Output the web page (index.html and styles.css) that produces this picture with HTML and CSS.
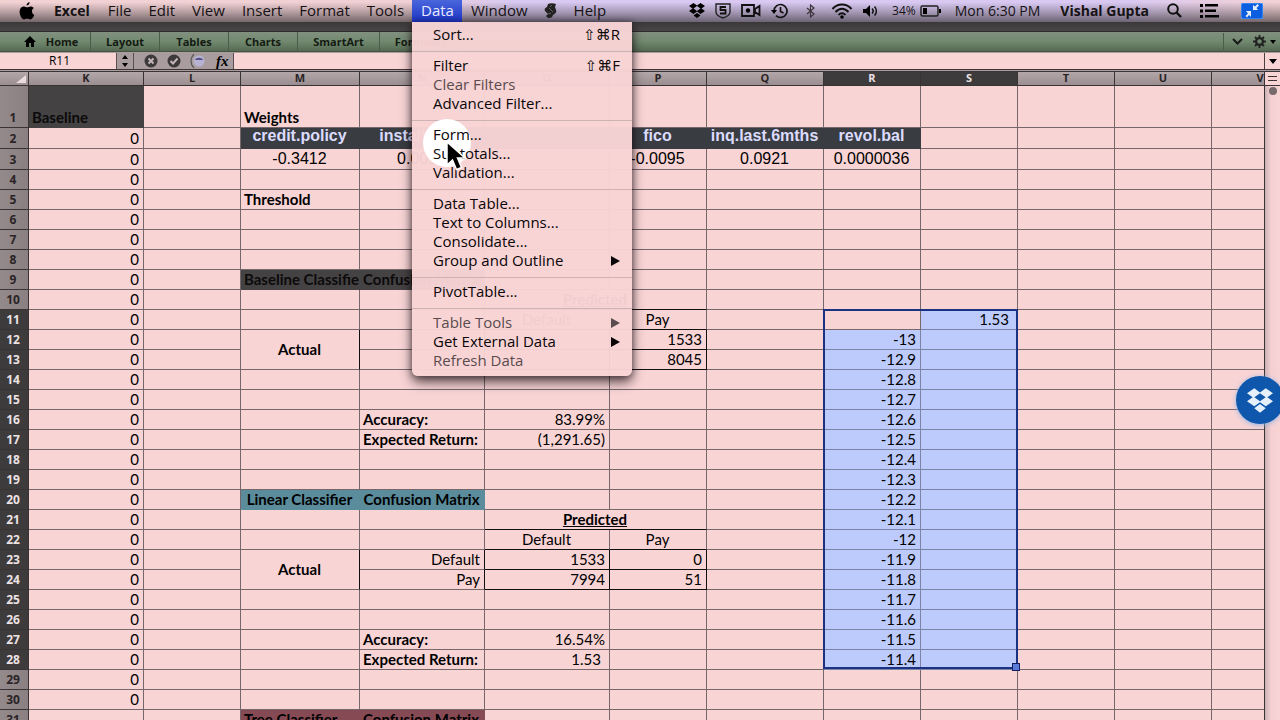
FILE: index.html
```html
<!DOCTYPE html>
<html lang="en">
<head>
<meta charset="utf-8">
<title>Excel</title>
<link rel="stylesheet" href="styles.css">
</head>
<body>
<header class="menubar">
  <nav class="menus">
    <button class="apple" aria-label="Apple"><svg width="16" height="18" viewBox="0 0 16 18"><path d="M10.6 0c.2 1.700-1.300 3.500-3 3.600C7.400 1.900 9 .2 10.600 0zM13 9.300c0-1.600.8-2.600 1.900-3.300-.8-1.100-2-1.600-3.300-1.600-1.400 0-2.300.8-3.300.8-1 0-2-.8-3.300-.8C2.500 4.400.6 6.500.6 9.800c0 3.600 2.400 7.700 4.500 7.700 1.100 0 1.700-.7 3.100-.7 1.400 0 1.900.7 3.100.7 1.600 0 3.200-2.300 3.900-4.500-1.400-.7-2.200-1.900-2.200-3.700z"/></svg></button>
    <button class="bold">Excel</button>
    <button>File</button>
    <button>Edit</button>
    <button>View</button>
    <button>Insert</button>
    <button>Format</button>
    <button>Tools</button>
    <div class="open">
      <button class="active">Data</button>
      <div class="menu">
        <div class="halo"></div>
        <button>Sort...<kbd>⇧⌘R</kbd></button>
        <hr>
        <button>Filter<kbd>⇧⌘F</kbd></button>
        <button class="off">Clear Filters</button>
        <button>Advanced Filter...</button>
        <hr>
        <button>Form...</button>
        <button>Subtotals...</button>
        <button>Validation...</button>
        <hr>
        <button>Data Table...</button>
        <button>Text to Columns...</button>
        <button>Consolidate...</button>
        <button>Group and Outline<i></i></button>
        <hr>
        <button>PivotTable...</button>
        <hr>
        <button class="off">Table Tools<i></i></button>
        <button>Get External Data<i></i></button>
        <button class="off">Refresh Data</button>
        <svg class="pointer" width="22" height="32" viewBox="0 0 22 32"><path d="M2 2v23l5.500-5 4 9.500 5-2-4-9.500H20z" fill="#000" stroke="#fff" stroke-width="1.500"/></svg>
      </div>
    </div>
    <button>Window</button>
    <button class="script" aria-label="Scripts"><svg width="13" height="16" viewBox="0 0 13 16"><path d="M4 1c2-1 5-1 8 0l-1 3 1 3c1 2-1 4-3 5l-1 2c-2 2-5 1-6-1l2-2-3-3c-1-2 0-3 2-4z" fill="#222"/><path d="M5 5l4 4M8 2L6 4M4 11l3-1" stroke="#665d64" fill="none"/></svg></button>
    <button>Help</button>
  </nav>
  <div class="status">
    <svg width="16" height="16" viewBox="0 0 16 16"><path d="M4.500 0L8 2.500 11.500 0 16 3l-3.500 2.500L16 8l-4.500 3L8 8.500 4.500 11 0 8l3.500-2.500L0 3zM8 3L4.500 5.500 8 8l3.500-2.500zM8 10l3.500 2.500L8 15l-3.500-2.500z"/></svg>
    <svg class="shield" width="16" height="16" viewBox="0 0 16 16"><path d="M1 1h14v8c0 3-4 5-7 6-3-1-7-3-7-6z" fill="none" stroke="#222" stroke-width="1.400"/><path d="M11 4H5.500v3h5v3.500H5" fill="none" stroke="#111" stroke-width="1.800"/></svg>
    <svg width="20" height="13" viewBox="0 0 20 13"><path d="M1 1h12v11H1zM14 5l4.500-3v9L14 8z" fill="none" stroke="#111" stroke-width="1.800"/><circle cx="7" cy="6.500" r="2.200"/></svg>
    <svg width="17" height="16" viewBox="0 0 17 16"><path d="M3 8a6.500 6.500 0 1 1 2 4.700M9.500 4v4.500l3 1.500" fill="none" stroke="#111" stroke-width="1.700"/><path d="M0 7h6L3 11z"/></svg>
    <svg class="bt" width="9" height="14" viewBox="0 0 9 14"><path d="M1 4l7 6-3.500 3V1L8 4l-7 6" fill="none" stroke="#3c353c" stroke-width="1.200"/></svg>
    <svg class="wifi" width="22" height="16" viewBox="0 0 22 16"><g fill="none" stroke="#111" stroke-width="2"><path d="M1.500 6c5-6 14-6 19 0M4.500 9c4-4.500 9-4.500 13 0M7.500 12c2-2.500 5-2.500 7 0"/></g><circle cx="11" cy="14" r="1.800"/></svg>
    <svg width="15" height="14" viewBox="0 0 15 14"><path d="M0 5h3l4-4v12L3 9H0z"/><path d="M9 4.500c1.500 1.500 1.500 3.500 0 5M11.500 2.500c2.500 2.500 2.500 6.500 0 9" fill="none" stroke="#111" stroke-width="1.500"/></svg>
    <span class="pct">34%</span>
    <svg class="bat" width="21" height="12" viewBox="0 0 21 12"><rect x="1" y="1" width="17" height="10" rx="1.500" fill="none" stroke="#222" stroke-width="1.500"/><path d="M3 3h4v6H3zM19 4h2v4h-2z"/></svg>
    <span class="clock">Mon 6:30 PM</span>
    <b class="user">Vishal Gupta</b>
    <svg class="find" width="15" height="15" viewBox="0 0 15 15"><circle cx="6" cy="6" r="4.800" fill="none" stroke="#111" stroke-width="2"/><path d="M9.500 9.500L14 14" stroke="#111" stroke-width="2.400"/></svg>
    <svg class="list" width="19" height="14" viewBox="0 0 19 14"><path d="M0 0h3v3H0zM5 0h13v2.500H5zM0 5.500h3v3H0zM5 5.500h11v2.500H5zM0 11h3v3H0zM5 11h14v2.500H5z"/></svg>
    <svg width="22" height="16" viewBox="0 0 22 16"><rect width="22" height="16" rx="2" fill="#0c5ee0" stroke="#5aa4f4"/><path d="M12 7V2l2 1.500L16.500 1 18 2.500 15.500 5 17 7zM10 8v6l-2-2-2 2.500L4.500 13 7 10.500 5 8z" fill="#e4eefc"/></svg>
  </div>
</header>
<div class="titleedge"></div>
<nav class="ribbon">
  <button class="home"><svg width="12" height="11" viewBox="0 0 12 11"><path d="M6 0l6 6h-2v5H7V7H5v4H2V6H0z"/></svg>Home</button>
  <button>Layout</button>
  <button>Tables</button>
  <button>Charts</button>
  <button class="wide">SmartArt</button>
  <button class="wide">Formulas</button>
  <div class="ribbon-end">
    <svg width="11" height="7" viewBox="0 0 11 7"><path d="M1 1l4.500 4.500L10 1" fill="none" stroke="#1a1a1a" stroke-width="2"/></svg>
    <svg width="13" height="13" viewBox="0 0 13 13"><circle cx="6.500" cy="6.500" r="3.400" fill="none" stroke="#222" stroke-width="2.200"/><path d="M6.500 0v3M6.500 10v3M0 6.500h3M10 6.500h3M2 2l2 2M9 9l2 2M11 2L9 4M4 9l-2 2" stroke="#222" stroke-width="1.800"/></svg>
    <svg width="6" height="4" viewBox="0 0 6 4"><path d="M0 0h6L3 4z"/></svg>
  </div>
</nav>
<div class="formulabar">
  <input class="namebox" aria-label="Name box" value="R11">
  <button class="spin" aria-label="Names"><svg width="6" height="12" viewBox="0 0 6 12"><path d="M0 4l3-4 3 4zM0 8h6l-3 4z"/></svg></button>
  <div class="tools">
    <svg width="14" height="14" viewBox="0 0 14 14"><circle cx="7" cy="7" r="6.500" fill="#3d393b"/><path d="M4.500 4.500l5 5M9.500 4.500l-5 5" stroke="#c4b6b8" stroke-width="2"/></svg>
    <svg width="14" height="14" viewBox="0 0 14 14"><circle cx="7" cy="7" r="6.500" fill="#3d393b"/><path d="M3.500 7L6 9.500l4.500-5" fill="none" stroke="#c4b6b8" stroke-width="2"/></svg>
    <svg width="15" height="14" viewBox="0 0 15 14"><path d="M4 0c-4 4-4 10 0 14" fill="none" stroke="#555" stroke-width="1.200"/><ellipse cx="9" cy="7" rx="5.500" ry="5.500" fill="#b7b2d2"/><path d="M5 6c1-3 7-3 8 0z" fill="#55508a"/></svg>
    <em>fx</em>
  </div>
  <input class="formula" aria-label="Formula">
  <button class="expand" aria-label="Expand formula bar"><svg width="8" height="5" viewBox="0 0 8 5"><path d="M0 0h8L4 5z"/></svg></button>
</div>
<main class="sheet">
  <div class="grid"><table id="grid"></table></div>
  <aside class="scroll"><div class="split"></div><div class="thumb"></div></aside>
  <button class="dropbox" aria-label="Dropbox"><svg width="26" height="25" viewBox="0 0 16 15"><path d="M4.500 0L8 2.500 11.500 0 16 3l-3.500 2.500L16 8l-4.500 3L8 8.500 4.500 11 0 8l3.500-2.500L0 3zM8 3L4.500 5.500 8 8l3.500-2.500zM8 9.700l3.500 2.500L8 15l-3.500-2.800z" fill="#e6f0fa"/></svg></button>
</main>
<script src="sheet.js"></script>
</body>
</html>
```

FILE: styles.css
```css
* { box-sizing: border-box; }
body {
  margin: 0;
  height: 100vh;
  display: flex;
  flex-direction: column;
  overflow: hidden;
  background: #f8d4d5;
  color: #000;
  font: 14px/19px "Open Sans", "Noto Sans", sans-serif;
}
button {
  border: 0;
  padding: 0;
  background: none;
  color: inherit;
  font: inherit;
  white-space: nowrap;
}
svg { display: block; flex: none; }

/* Menu bar */
.menubar {
  position: relative;
  z-index: 5;
  flex: none;
  height: 22px;
  display: flex;
  justify-content: space-between;
  background:
    linear-gradient(rgba(0, 0, 0, 0) 10%, rgba(70, 64, 68, .35) 55%, rgba(50, 46, 50, .65)),
    linear-gradient(90deg, #f3d2d4 0, #f0d0d4 32%, #d8c8f2 40%, #d8c8f2 88%, #f3d2d4);
  color: #161214;
}
.menus { display: flex; font-size: 15px; }
.menus > button, .open > button { height: 22px; padding: 0 8px 1px 9px; }
.menus > .apple { padding: 0 10px 0 19px; }
.menus > .script { padding: 0 8px; }
.menus > .bold { padding-right: 9px; font-size: 14px; font-weight: 700; }
.open { position: relative; }
.open > .active { background: linear-gradient(#4a66dc, #1c35c4); color: #e8eaff; }
.status { display: flex; align-items: center; gap: 10px; padding: 0 17px 1px 0; white-space: nowrap; }
.status .bt { margin: 0 6px 0 8px; }
.pct { font-size: 12px; margin-left: 4px; }
.pct + .bat { margin-left: -6px; }
.clock { margin-left: 4px; }
.user { margin: 0 4px 0 10px; }
.find { margin-left: 4px; }
.list { margin: 0 12px 0 8px; }

.menu {
  position: absolute;
  top: 22px;
  left: 0;
  width: 220px;
  padding: 4px 0 5px;
  display: flex;
  flex-direction: column;
  border-radius: 0 0 6px 6px;
  background: rgba(248, 212, 213, .97);
  box-shadow: 0 6px 12px rgba(20, 10, 14, .7), 0 0 6px rgba(20, 10, 14, .4);
  color: #0a0608;
}
.menu > button {
  position: relative;
  height: 19px;
  padding: 0 12px 2px 21px;
  display: flex;
  justify-content: space-between;
  align-items: center;
  line-height: 17px;
}
.menu > .off { color: #5a4c4e; }
.menu hr {
  width: 100%;
  height: 1px;
  margin: 6px 0 5px;
  border: 0;
  background: #cfb2b4;
}
.menu kbd { font: 15px/17px "Open Sans", "DejaVu Sans", sans-serif; }
.menu i {
  border: 5px solid transparent;
  border-left: 9px solid currentColor;
  border-right: 0;
}
.halo {
  position: absolute;
  left: 11px;
  top: 97px;
  width: 48px;
  height: 48px;
  border-radius: 50%;
  background: #fff;
}
.pointer { position: absolute; left: 33px; top: 118px; }

/* Ribbon */
.titleedge { flex: none; height: 10px; background: linear-gradient(#3a3839, #484647); border-bottom: 1px solid #2e2c2d; }
.ribbon {
  flex: none;
  height: 20px;
  display: flex;
  background: linear-gradient(#829080, #71896f 50%, #566953);
  border-bottom: 1px solid #46543f;
  color: #141a12;
  font-size: 11px;
  font-weight: 700;
}
.ribbon button { width: 69px; border-right: 1px solid #4c5c4a; }
.ribbon .home { width: 91px; display: flex; align-items: center; justify-content: center; gap: 10px; padding-left: 12px; }
.ribbon .wide { width: 82px; }
.ribbon-end {
  margin: 1px 0 1px auto;
  padding: 0 4px 0 8px;
  display: flex;
  align-items: center;
  gap: 4px;
  border-left: 1px solid #4c5c4a;
}
.ribbon-end svg:nth-child(2) { margin-left: 6px; }

/* Formula bar */
.formulabar {
  flex: none;
  height: 20px;
  display: flex;
  padding-top: 1px;
  background: #a89c9e;
  border-bottom: 3px double #3c3436;
}
.formulabar input {
  min-width: 0;
  border: 0;
  padding: 0;
  background: #f8d4d5;
  font: 12px/16px "Open Sans", sans-serif;
}
.formulabar .namebox { width: 116px; padding-left: 3px; text-align: center; }
.spin {
  width: 18px;
  display: flex;
  align-items: center;
  justify-content: center;
  border: solid #5a5052;
  border-width: 0 1px;
}
.tools { width: 99px; padding-left: 10px; display: flex; align-items: center; gap: 9px; }
.tools em { font: italic bold 15px/16px "Liberation Serif", serif; margin-left: 2px; }
.formulabar .formula { flex: 1; border-left: 1px solid #5a5052; }
.expand {
  width: 16px;
  display: flex;
  align-items: center;
  justify-content: center;
  border-left: 1px solid #4a4042;
  background: #f8d4d5;
}

/* Worksheet */
.sheet { position: relative; flex: 1; min-height: 0; display: flex; overflow: hidden; }
.grid { flex: 1; min-width: 0; overflow: hidden; }
table {
  width: 100%;
  min-width: 1309px;
  table-layout: fixed;
  border-spacing: 0;
  font: 15px/19px Lato, "Open Sans", sans-serif;
}
td, th {
  height: 20px;
  padding: 0 4px 0 3px;
  border: solid #75676a;
  border-width: 0 1px 1px 0;
  overflow: hidden;
  white-space: nowrap;
  vertical-align: bottom;
  text-align: right;
}
thead th {
  height: 14px;
  padding: 0 0 1px;
  border-color: #3a3335;
  background: linear-gradient(#b3a7a9, #9a8e90);
  overflow: visible;
  font: 700 11px/12px "Open Sans", sans-serif;
  text-align: center;
  color: #2a2426;
}
thead th:first-child { text-align: right; padding-right: 2px; }
thead th svg { display: inline-block; vertical-align: top; margin-top: 3px; }
tbody th {
  padding: 0 2px 0 0;
  border-color: #3a3335;
  background: linear-gradient(90deg, #948a8c, #8a8082);
  font: 700 12px/18px "Open Sans", sans-serif;
  text-align: center;
  color: #2a2426;
}
thead th.on, tbody th.on { background: #3d3b3c; color: #ece2e4; }
.r1 > * { height: 42px; }
.r2 > *, .r3 > * { height: 21px; }
.c { text-align: center; vertical-align: middle; }
.l { text-align: left; }
.b { font-weight: 700; }
.u { text-decoration: underline; }
.num { padding-right: 8px; }
.arial { font-family: "Liberation Sans", sans-serif; font-size: 16px; line-height: 19px; vertical-align: top; }
.head { background: #393d42; color: #dcdcff; border-color: #393d42; line-height: 15px; }
.dark { background: #444243; border-color: #444243; color: #0c0a0b; }
.teal { background: #5a8c9c; border-color: #5a8c9c; }
.wine { background: #864a54; border-color: #864a54; }
.fill { background: #bccbfb; border-color: #7b84a4; }
.kr { border-right-color: #101010; }
.kb { border-bottom-color: #101010; }
.anchor { position: relative; overflow: visible; }
.range {
  position: absolute;
  left: -1px;
  top: -1px;
  width: 195px;
  height: 360px;
  border: 2px solid #1b3182;
  pointer-events: none;
}
.range::after {
  content: "";
  position: absolute;
  right: -4px;
  bottom: -4px;
  width: 6px;
  height: 6px;
  border: 1px solid #102060;
  background: #5a7ad8;
}

.scroll {
  width: 16px;
  border-left: 1px solid #3a3335;
  background: linear-gradient(90deg, #cbb2b4, #f4d0d2 40%, #f8d4d5);
}
.split { height: 14px; margin: 0; border: solid #3a3335; border-width: 0 0 1px; background: linear-gradient(#f8d4d5 4px, #3a3335 4px 5px, #f8d4d5 5px 8px, #3a3335 8px 9px, #f8d4d5 9px) center / 9px 100% no-repeat #f8d4d5; }
.thumb { width: 8px; height: 8px; margin: 1px auto; border-radius: 4px; background: #77696c; }
.dropbox {
  position: absolute;
  right: -4px;
  top: 304px;
  width: 48px;
  height: 48px;
  display: flex;
  align-items: center;
  justify-content: center;
  border-radius: 50%;
  background: #0f57ac;
  box-shadow: 0 1px 5px #8eb4e4;
}
```

FILE: sheet.js
```js
const columns = { K: 115, L: 97, M: 119, N: 125, O: 125, P: 97, Q: 117, R: 97, S: 97, T: 97, U: 97, V: 0 };

// address: [text, classes, colspan, rowspan]
const cells = {
  K1: ["Baseline", "l b dark"],
  M1: ["Weights", "l b"],
  M2: ["credit.policy", "c b arial head"], N2: ["installment", "c b arial head"],
  O2: ["", "head"], P2: ["fico", "c b arial head"],
  Q2: ["inq.last.6mths", "c b arial head"], R2: ["revol.bal", "c b arial head"],
  M3: ["-0.3412", "c arial"], N3: ["0.0010", "c arial"],
  P3: ["-0.0095", "c arial"], Q3: ["0.0921", "c arial"], R3: ["0.0000036", "c arial"],
  M5: ["Threshold", "l b"],
  M9: ["Baseline Classifier", "l b dark"], N9: ["Confusion Matrix", "l b dark"],
  O10: ["Predicted", "c b u kb", 2],
  O11: ["Default", "c kb"], P11: ["Pay", "c kb"],
  M12: ["Actual", "c b kr", 1, 2], N12: ["", "kr"],
  O12: ["", "kr kb"], P12: ["1533", "kr kb"],
  N13: ["", "kr"], O13: ["", "kr kb"], P13: ["8045", "kr kb"],
  N16: ["Accuracy:", "l b"], O16: ["83.99%", ""],
  N17: ["Expected Return:", "l b"], O17: ["(1,291.65)", ""],
  M20: ["Linear Classifier", "c b teal"], N20: ["Confusion Matrix", "c b teal"],
  O21: ["Predicted", "c b u kb", 2],
  O22: ["Default", "c kb"], P22: ["Pay", "c kb"],
  M23: ["Actual", "c b kr", 1, 2],
  N23: ["Default", "kr"], O23: ["1533", "kr kb"], P23: ["0", "kr kb"],
  N24: ["Pay", "kr"], O24: ["7994", "kr kb"], P24: ["51", "kr kb"],
  N27: ["Accuracy:", "l b"], O27: ["16.54%", ""],
  N28: ["Expected Return:", "l b"], O28: ["1.53", "num"],
  M31: ["Tree Classifier", "l b wine"], N31: ["Confusion Matrix", "l b wine"],
  R11: ['<span class="range"></span>', "anchor"], S11: ["1.53", "num fill"]
};
for (let r = 2; r <= 30; r++) cells["K" + r] = ["0", ""];
for (let r = 12; r <= 28; r++) {
  const v = (-130 + (r - 12)) / 10;
  cells["R" + r] = [String(v), "fill"];
  cells["S" + r] = ["", "fill"];
}

const covered = new Set(["P10", "P21", "M13", "M24"]);
const names = Object.keys(columns);
const corner = '<svg width="10" height="8" viewBox="0 0 10 8"><path d="M10 0v8H0z" fill="#ecdcde"/></svg>';

let html = '<colgroup><col style="width:29px">';
for (const n of names) html += columns[n] ? `<col style="width:${columns[n]}px">` : "<col>";
html += `</colgroup><thead><tr><th>${corner}</th>`;
for (const n of names) html += `<th class="${n === "R" || n === "S" ? "on" : ""}">${n}</th>`;
html += "</tr></thead><tbody>";
for (let r = 1; r <= 31; r++) {
  html += `<tr class="r${r}"><th class="${r >= 11 && r <= 28 ? "on" : ""}">${r}</th>`;
  for (const n of names) {
    if (covered.has(n + r)) continue;
    const [text, cls, cs = 1, rs = 1] = cells[n + r] || ["", ""];
    html += `<td class="${cls}" colspan="${cs}" rowspan="${rs}">${text}</td>`;
  }
  html += "</tr>";
}
document.getElementById("grid").innerHTML = html + "</tbody>";
```
